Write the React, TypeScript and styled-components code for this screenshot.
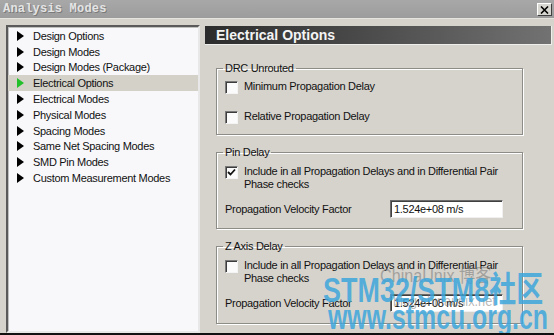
import { FC } from 'react';
import styled, { createGlobalStyle } from 'styled-components';

const GlobalStyle = createGlobalStyle`
  html, body {
    margin: 0;
    padding: 0;
    background: #d6d3cc;
  }
  body {
    font-family: 'Liberation Sans', Arial, sans-serif;
    font-size: 11px;
    letter-spacing: -0.3px;
    color: #111;
  }
`;

const Window = styled.div`
  position: relative;
  width: 554px;
  height: 335px;
  display: flex;
  flex-direction: column;
  background: #d6d3cc;
  overflow: hidden;
  border-bottom: 2px solid #111;
  box-sizing: border-box;
`;

const TitleBar = styled.div`
  height: 18px;
  display: flex;
  align-items: center;
  justify-content: space-between;
  padding: 0 2px 0 3px;
  background: linear-gradient(180deg, #a8a8a8 0%, #9c9c9c 100%);
  border-bottom: 1px solid #e6e4de;
`;

const Title = styled.span`
  font-family: 'Liberation Mono', 'DejaVu Sans Mono', monospace;
  font-weight: bold;
  font-size: 12px;
  letter-spacing: 0.2px;
  color: #e4e4e4;
  text-shadow: 1px 1px 0 #7a7a7a;
`;

const CloseButton = styled.div`
  width: 15px;
  height: 13px;
  display: flex;
  align-items: center;
  justify-content: center;
  background: #d8d6d0;
  border: 1px solid;
  border-color: #fff #404040 #404040 #fff;
  box-sizing: border-box;
  margin-top: 1px;
`;

const Body = styled.div`
  flex: 1;
  display: flex;
  padding: 6px 2px 0 6px;
  gap: 5px;
`;

const ListBox = styled.div`
  width: 194px;
  align-self: stretch;
  background: #f8f8fa;
  border: 2px solid;
  border-color: #5a5a5a #e8e8e8 #e8e8e8 #5a5a5a;
  box-shadow: inset 1px 1px 0 #c0c0c0;
  box-sizing: border-box;
  padding-top: 1px;
`;

const ListRow = styled.div<{ $active?: boolean }>`
  height: 15.8px;
  display: flex;
  align-items: center;
  gap: 9px;
  padding-left: 9px;
  background: ${(p) => (p.$active ? '#d4d1c9' : 'transparent')};
`;

const Arrow = styled.span<{ $active?: boolean }>`
  width: 0;
  height: 0;
  border-top: 5px solid transparent;
  border-bottom: 5px solid transparent;
  border-left: 7px solid ${(p) => (p.$active ? '#22c02a' : '#000')};
`;

const RightPane = styled.div`
  flex: 1;
  display: flex;
  flex-direction: column;
  padding-top: 1px;
`;

const Header = styled.div`
  height: 18px;
  display: flex;
  align-items: center;
  padding-left: 11px;
  background: linear-gradient(90deg, #2c2c2c 0%, #4a4a4a 45%, #727272 100%);
  border-bottom: 1px solid #eeeeea;
  border-right: 1px solid #eeeeea;
  color: #f4f4f4;
  font-weight: bold;
  font-size: 14px;
  letter-spacing: 0;
`;

const Groups = styled.div`
  display: flex;
  flex-direction: column;
  padding: 17px 0 0 11px;
  width: 307px;
`;

const GroupBox = styled.fieldset<{ $height: number; $gap: number }>`
  height: ${(p) => p.$height}px;
  margin: 0 0 ${(p) => p.$gap}px 0;
  padding: 0 8px;
  border: 1px solid #8e8c86;
  box-shadow: 1px 1px 0 #fff, inset 1px 1px 0 #fff;
  box-sizing: border-box;
  display: flex;
  flex-direction: column;
  min-width: 0;
`;

const Legend = styled.legend`
  padding: 0 2px;
  margin-left: -2px;
  font-size: 11px;
  line-height: 12px;
  color: #111;
`;

const CheckRow = styled.div<{ $top: number }>`
  display: flex;
  align-items: flex-start;
  gap: 6px;
  margin-top: ${(p) => p.$top}px;
  line-height: 13px;
`;

const CheckBox = styled.span`
  flex: none;
  width: 11px;
  height: 11px;
  margin-top: 1px;
  background: #fbfbfb;
  border: 1px solid;
  border-color: #7a7a7a #f4f4f4 #f4f4f4 #7a7a7a;
  box-shadow: inset 1px 1px 0 #3c3c3c;
  display: flex;
  align-items: center;
  justify-content: center;
`;

const FieldRow = styled.div<{ $top: number }>`
  display: flex;
  align-items: center;
  justify-content: space-between;
  margin-top: ${(p) => p.$top}px;
  padding-right: 11px;
`;

const TextInput = styled.div`
  width: 113px;
  height: 18px;
  box-sizing: border-box;
  background: #fff;
  border: 1px solid;
  border-color: #6a6a6a #f0f0f0 #f0f0f0 #6a6a6a;
  box-shadow: inset 1px 1px 0 #404040;
  display: flex;
  align-items: center;
  padding-left: 3px;
  font-size: 11px;
`;

const Watermark = styled.div<{
  $x: number;
  $y: number;
  $size: number;
  $color: string;
  $scale: number;
  $bold?: boolean;
}>`
  position: absolute;
  left: ${(p) => p.$x}px;
  top: ${(p) => p.$y}px;
  font-size: ${(p) => p.$size}px;
  line-height: 1.15;
  color: ${(p) => p.$color};
  font-family: 'Liberation Sans', 'Noto Sans CJK SC', sans-serif;
  font-weight: ${(p) => (p.$bold ? 'bold' : 'normal')};
  letter-spacing: 0;
  white-space: nowrap;
  transform: scaleX(${(p) => p.$scale});
  transform-origin: left top;
  pointer-events: none;
`;

const items = [
  'Design Options',
  'Design Modes',
  'Design Modes (Package)',
  'Electrical Options',
  'Electrical Modes',
  'Physical Modes',
  'Spacing Modes',
  'Same Net Spacing Modes',
  'SMD Pin Modes',
  'Custom Measurement Modes',
];

const Tick: FC = () => (
  <svg width="9" height="9" viewBox="0 0 9 9">
    <path d="M1 4 L3.5 6.5 L8 1.5" stroke="#111" strokeWidth="1.8" fill="none" />
  </svg>
);

const App: FC = () => {
  return (
    <>
      <GlobalStyle />
      <Window>
        <TitleBar>
          <Title>Analysis Modes</Title>
          <CloseButton>
            <svg width="9" height="8" viewBox="0 0 9 8">
              <path d="M1 0.5 L8 7.5 M8 0.5 L1 7.5" stroke="#000" strokeWidth="1.6" />
            </svg>
          </CloseButton>
        </TitleBar>
        <Body>
          <ListBox>
            {items.map((item) => (
              <ListRow key={item} $active={item === 'Electrical Options'}>
                <Arrow $active={item === 'Electrical Options'} />
                <span>{item}</span>
              </ListRow>
            ))}
          </ListBox>
          <RightPane>
            <Header>Electrical Options</Header>
            <Groups>
              <GroupBox $height={73} $gap={11}>
                <Legend>DRC Unrouted</Legend>
                <CheckRow $top={6}>
                  <CheckBox />
                  <span>Minimum Propagation Delay</span>
                </CheckRow>
                <CheckRow $top={16}>
                  <CheckBox />
                  <span>Relative Propagation Delay</span>
                </CheckRow>
              </GroupBox>
              <GroupBox $height={83} $gap={11}>
                <Legend>Pin Delay</Legend>
                <CheckRow $top={7}>
                  <CheckBox>
                    <Tick />
                  </CheckBox>
                  <span>
                    Include in all Propagation Delays and in Differential Pair
                    <br />
                    Phase checks
                  </span>
                </CheckRow>
                <FieldRow $top={9}>
                  <span>Propagation Velocity Factor</span>
                  <TextInput>1.524e+08 m/s</TextInput>
                </FieldRow>
              </GroupBox>
              <GroupBox $height={84} $gap={0}>
                <Legend>Z Axis Delay</Legend>
                <CheckRow $top={7}>
                  <CheckBox />
                  <span>
                    Include in all Propagation Delays and in Differential Pair
                    <br />
                    Phase checks
                  </span>
                </CheckRow>
                <FieldRow $top={9}>
                  <span>Propagation Velocity Factor</span>
                  <TextInput>1.524e+08 m/s</TextInput>
                </FieldRow>
              </GroupBox>
            </Groups>
          </RightPane>
        </Body>
        <Watermark $x={380} $y={265} $size={19} $scale={0.85} $color="rgba(110,110,110,0.5)">
          ChinaUnix 博客
        </Watermark>
        <Watermark $x={393} $y={292} $size={15} $scale={0.85} $color="rgba(110,110,110,0.5)">
          blog.chinaunix.net
        </Watermark>
        <Watermark $x={323} $y={270} $size={35} $scale={0.77} $bold $color="rgba(60,165,220,0.85)">
          STM32/STM8社区
        </Watermark>
        <Watermark $x={328} $y={297} $size={35} $scale={0.71} $bold $color="rgba(60,165,220,0.85)">
          www.stmcu.org.cn
        </Watermark>
      </Window>
    </>
  );
};

export default App;
